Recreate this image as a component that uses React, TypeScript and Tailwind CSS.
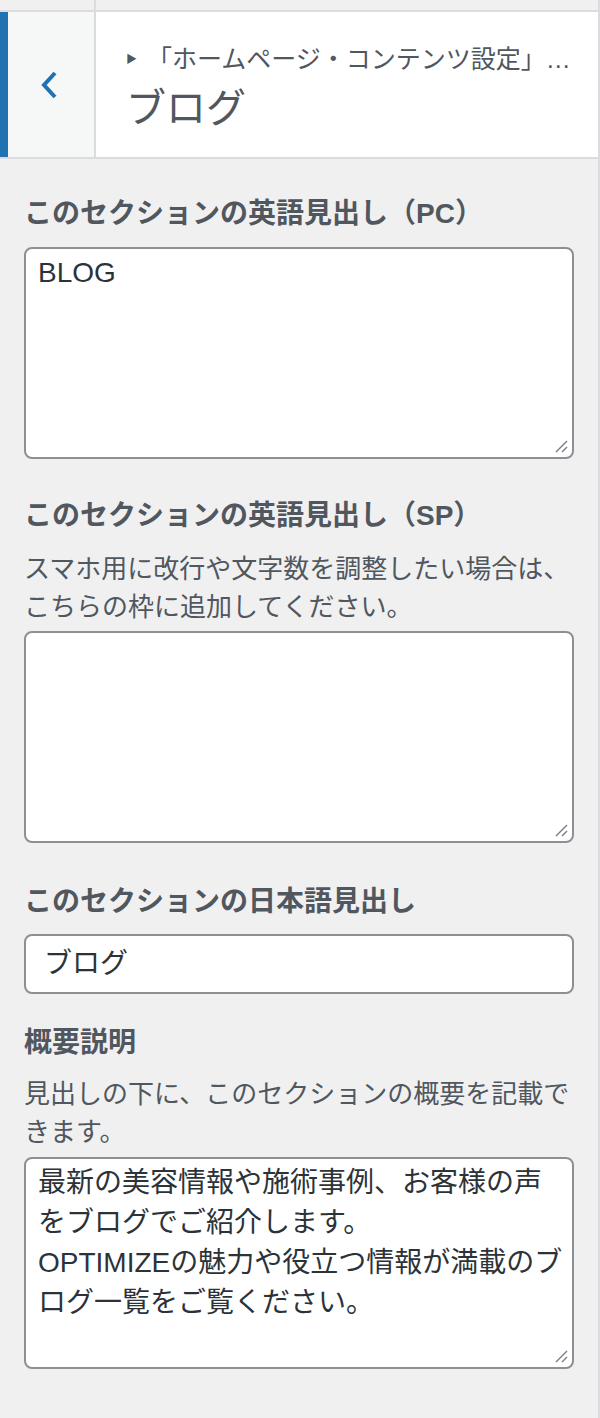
const font = "font-['Liberation_Sans','Noto_Sans_CJK_JP',sans-serif]";

const ResizeHandle = () => (
  <svg className="absolute right-[4px] bottom-[4px]" width="14" height="14" viewBox="0 0 14 14">
    <line x1="2" y1="13" x2="13" y2="2" stroke="#7c7f84" strokeWidth="1.5" />
    <line x1="8" y1="13" x2="13" y2="8" stroke="#7c7f84" strokeWidth="1.5" />
  </svg>
);

const Label = ({ children, className = "" }: { children: React.ReactNode; className?: string }) => (
  <h3 className={`text-[28px] leading-[40px] font-bold text-[#50575e] ${className}`}>{children}</h3>
);

const Description = ({ lines, className = "" }: { lines: string[]; className?: string }) => (
  <p className={`text-[26px] leading-[38px] text-[#50575e] ${className}`}>
    {lines.map((l, i) => (
      <span key={i} className="block whitespace-nowrap">
        {l}
      </span>
    ))}
  </p>
);

const TextBox = ({ lines, className = "" }: { lines: string[]; className?: string }) => (
  <div
    className={`relative h-[212px] w-full rounded-[8px] border-2 border-[#8c8f94] bg-white px-[12px] py-[4px] text-[28px] leading-[40px] text-[#2c3338] ${className}`}
  >
    {lines.map((l, i) => (
      <span key={i} className="block whitespace-nowrap">
        {l}
      </span>
    ))}
    <ResizeHandle />
  </div>
);

export default function App() {
  return (
    <div className={`${font} min-h-[1418px] w-[600px] border-r-2 border-[#dcdcde] bg-[#f0f0f1]`}>
      <div className="flex h-[10px]">
        <div className="w-[94px]" />
        <div className="w-[2px] bg-[#dcdcde]" />
      </div>
      <header className="flex h-[149px] border-y-2 border-[#dcdcde] bg-white">
        <div className="w-[8px] bg-[#2271b1]" />
        <button className="flex w-[88px] items-center justify-center border-r-2 border-[#dcdcde] bg-[#f6f7f7] pr-[2px]">
          <svg width="20" height="30" viewBox="0 0 20 30">
            <polyline points="15,3 4,15 15,27" fill="none" stroke="#2271b1" strokeWidth="4" strokeLinejoin="miter" />
          </svg>
        </button>
        <div className="flex flex-1 flex-col pl-[30px] pt-[30px] text-[#50575e]">
          <div className="flex h-[34px] items-center text-[25px] leading-[34px]">
            <span className="mr-[10px] text-[11px]">▶</span>
            <span className="whitespace-nowrap">「ホームページ・コンテンツ設定」…</span>
          </div>
          <div className="mt-[6px] text-[40px] leading-[52px]">ブログ</div>
        </div>
      </header>
      <main className="px-[24px] pb-[48px]">
        <Label className="mt-[35px]">このセクションの英語見出し（PC）</Label>
        <TextBox className="mt-[13px]" lines={["BLOG"]} />

        <Label className="mt-[37px]">このセクションの英語見出し（SP）</Label>
        <Description
          className="mt-[14px]"
          lines={["スマホ用に改行や文字数を調整したい場合は、", "こちらの枠に追加してください。"]}
        />
        <TextBox className="mt-[5px] h-[211px]" lines={[]} />

        <Label className="mt-[39px]">このセクションの日本語見出し</Label>
        <div className="mt-[12px] flex h-[60px] w-full items-center rounded-[8px] border-2 border-[#8c8f94] bg-white px-[18px] text-[28px] text-[#2c3338]">
          ブログ
        </div>

        <Label className="mt-[29px]">概要説明</Label>
        <Description
          className="mt-[12px]"
          lines={["見出しの下に、このセクションの概要を記載で", "きます。"]}
        />
        <TextBox
          className="mt-[6px]"
          lines={[
            "最新の美容情報や施術事例、お客様の声",
            "をブログでご紹介します。",
            "OPTIMIZEの魅力や役立つ情報が満載のブ",
            "ログ一覧をご覧ください。",
          ]}
        />
      </main>
    </div>
  );
}
